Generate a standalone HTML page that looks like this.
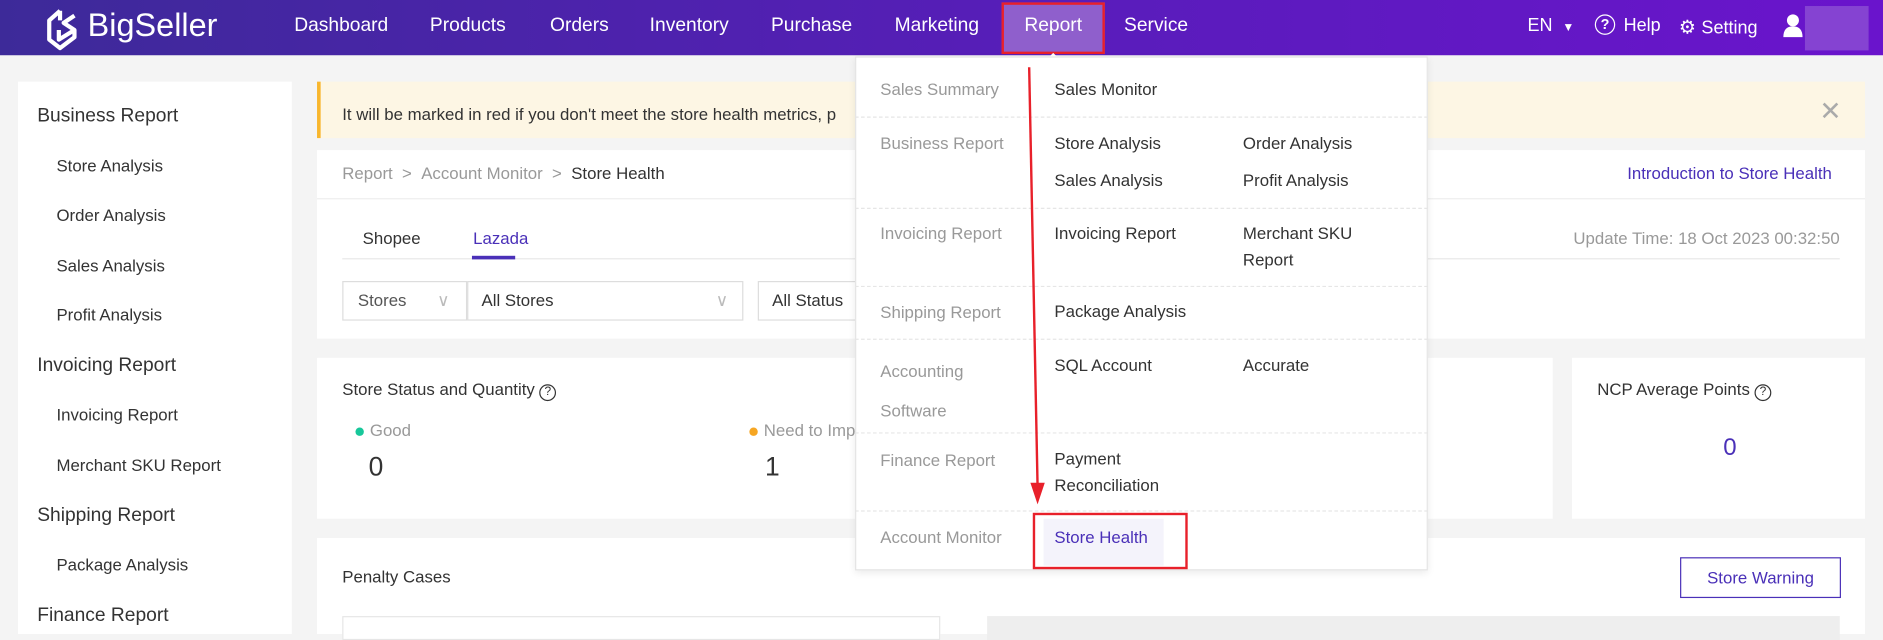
<!DOCTYPE html>
<html><head><meta charset="utf-8"><style>
*{margin:0;padding:0;box-sizing:border-box}
html,body{width:1883px;height:631px;overflow:hidden;background:#f4f4f4}
#s{position:absolute;left:0;top:0;width:1568px;height:526px;transform:scale(1.2009);transform-origin:0 0;font-family:"Liberation Sans",sans-serif;color:#333;font-size:14px}
.a{position:absolute;white-space:nowrap}
.hd{position:absolute;left:0;top:0;width:1568px;height:46px;background:linear-gradient(90deg,#3d2a99,#5a1cbc 60%,#6a14cc)}
.nav{color:#fff;font-size:16px;top:13px}
.w{background:#fff;position:absolute}
.g{color:#999}
.sb{font-size:16px}
.dl{position:absolute;left:712px;width:477px;border-top:1px dashed #e6e6e6}
</style></head><body><div id="s">
<div class="hd"></div>
<svg class="a" style="left:35px;top:5px" width="34" height="40" viewBox="0 0 34 40"><path d="M15 4 L6 12 V28 L15 35 L27 26 V20 L18 14 L27 8 M27 20 L14 28 V20 M15 4 V12" fill="none" stroke="#fff" stroke-width="3.5" stroke-linejoin="round"/></svg>
<div class="a" style="left:73px;top:6px;color:#fff;font-size:27px">BigSeller</div>
<div class="a nav" style="left:245px">Dashboard</div>
<div class="a nav" style="left:358px">Products</div>
<div class="a nav" style="left:458px">Orders</div>
<div class="a nav" style="left:541px">Inventory</div>
<div class="a nav" style="left:642px">Purchase</div>
<div class="a nav" style="left:745px">Marketing</div>
<div class="a" style="left:834px;top:2px;width:86px;height:43px;background:#8f5fcc;border:2px solid #e8202a"></div>
<div class="a nav" style="left:853px">Report</div>
<div class="a" style="left:871px;top:38px;width:0;height:0;border:6px solid transparent;border-bottom-color:#fff"></div>
<div class="a nav" style="left:936px">Service</div>
<div class="a nav" style="left:1272px;font-size:15px">EN <span style="font-size:10px;margin-left:4px">▼</span></div>
<div class="a" style="left:1328px;top:12px;width:17px;height:17px;border:1.5px solid #fff;border-radius:50%;color:#fff;font-size:12px;text-align:center;line-height:14px;font-weight:bold">?</div>
<div class="a nav" style="left:1352px;font-size:15px">Help</div>
<div class="a nav" style="left:1398px;font-size:16px">⚙ <span style="font-size:15px">Setting</span></div>
<svg class="a" style="left:1484px;top:11px" width="18" height="20"><circle cx="9" cy="6" r="5" fill="#fff"/><path d="M1 20 Q1 11 9 11 Q17 11 17 20Z" fill="#fff"/></svg>
<div class="a" style="left:1503px;top:5px;width:53px;height:37px;background:#8543d2"></div>

<div class="w" style="left:15px;top:68px;width:228px;height:460px"></div>
<div class="a sb" style="left:31px;top:88px">Business Report</div>
<div class="a" style="left:47px;top:130px">Store Analysis</div>
<div class="a" style="left:47px;top:171px">Order Analysis</div>
<div class="a" style="left:47px;top:213px">Sales Analysis</div>
<div class="a" style="left:47px;top:254px">Profit Analysis</div>
<div class="a sb" style="left:31px;top:296px">Invoicing Report</div>
<div class="a" style="left:47px;top:337px">Invoicing Report</div>
<div class="a" style="left:47px;top:379px">Merchant SKU Report</div>
<div class="a sb" style="left:31px;top:421px">Shipping Report</div>
<div class="a" style="left:47px;top:462px">Package Analysis</div>
<div class="a sb" style="left:31px;top:504px">Finance Report</div>

<div class="a" style="left:264px;top:68px;width:1289px;height:47px;background:#fdf6e4;border-left:3px solid #f8b62d"></div>
<div class="a" style="left:285px;top:87px">It will be marked in red if you don't meet the store health metrics, p</div>
<div class="a" style="left:1515px;top:80px;color:#aaa;font-size:22px">✕</div>

<div class="w" style="left:264px;top:125px;width:1289px;height:157px"></div>
<div class="a" style="left:264px;top:165px;width:1289px;border-top:1px solid #eee"></div>
<div class="a g" style="left:285px;top:136px">Report &nbsp;&gt; &nbsp;Account Monitor &nbsp;&gt; <span style="color:#333">&nbsp;Store Health</span></div>
<div class="a" style="left:1355px;top:136px;color:#4a30b8">Introduction to Store Health</div>
<div class="a" style="left:302px;top:190px">Shopee</div>
<div class="a" style="left:394px;top:190px;color:#4a30b8">Lazada</div>
<div class="a" style="left:285px;top:215px;width:1247px;border-top:1px solid #e8e8e8"></div>
<div class="a" style="left:393px;top:213px;width:36px;height:3px;background:#4a30b8"></div>
<div class="a g" style="right:36px;top:190px">Update Time: 18 Oct 2023 00:32:50</div>
<div class="a" style="left:285px;top:234px;width:104px;height:33px;border:1px solid #ddd;padding:7px 12px;color:#555">Stores<span style="position:absolute;left:78px;color:#bbb">∨</span></div>
<div class="a" style="left:389px;top:234px;width:230px;height:33px;border:1px solid #ddd;padding:7px 11px">All Stores<span style="position:absolute;left:206px;color:#bbb">∨</span></div>
<div class="a" style="left:631px;top:234px;width:90px;height:33px;border:1px solid #ddd;padding:7px 11px">All Status</div>

<div class="w" style="left:264px;top:298px;width:1029px;height:134px"></div>
<div class="w" style="left:1309px;top:298px;width:244px;height:134px"></div>
<div class="a" style="left:285px;top:316px">Store Status and Quantity <span style="display:inline-block;width:14px;height:14px;border:1px solid #333;border-radius:50%;font-size:10px;text-align:center;line-height:12px">?</span></div>
<div class="a g" style="left:296px;top:350px"><span style="display:inline-block;width:7px;height:7px;border-radius:50%;background:#17c79a;margin-right:5px"></span>Good</div>
<div class="a g" style="left:624px;top:350px"><span style="display:inline-block;width:7px;height:7px;border-radius:50%;background:#f6a623;margin-right:5px"></span>Need to Imp</div>
<div class="a" style="left:307px;top:376px;font-size:22px">0</div>
<div class="a" style="left:637px;top:376px;font-size:22px">1</div>
<div class="a" style="left:1330px;top:316px">NCP Average Points <span style="display:inline-block;width:14px;height:14px;border:1px solid #333;border-radius:50%;font-size:10px;text-align:center;line-height:12px">?</span></div>
<div class="a" style="left:1435px;top:362px;font-size:20px;color:#4a30b8">0</div>

<div class="w" style="left:264px;top:448px;width:1289px;height:80px"></div>
<div class="a" style="left:285px;top:472px">Penalty Cases</div>
<div class="a" style="left:1399px;top:464px;width:134px;height:34px;border:1px solid #4a30b8;color:#4a30b8;text-align:center;line-height:32px">Store Warning</div>
<div class="a" style="left:285px;top:513px;width:498px;height:20px;border:1px solid #e6e6e6;background:#fff"></div>
<div class="a" style="left:822px;top:513px;width:710px;height:20px;background:#eee"></div>

<div class="a" style="left:712px;top:47px;width:477px;height:428px;background:#fff;border:1px solid #e4e4e4;box-shadow:0 2px 6px rgba(0,0,0,.08)"></div>
<div class="dl" style="top:97px"></div><div class="dl" style="top:173px"></div><div class="dl" style="top:238px"></div><div class="dl" style="top:282px"></div><div class="dl" style="top:360px"></div><div class="dl" style="top:425px"></div>
<div class="a g" style="left:733px;top:66px">Sales Summary</div>
<div class="a" style="left:878px;top:66px">Sales Monitor</div>
<div class="a g" style="left:733px;top:111px">Business Report</div>
<div class="a" style="left:878px;top:111px">Store Analysis</div>
<div class="a" style="left:1035px;top:111px">Order Analysis</div>
<div class="a" style="left:878px;top:142px">Sales Analysis</div>
<div class="a" style="left:1035px;top:142px">Profit Analysis</div>
<div class="a g" style="left:733px;top:186px">Invoicing Report</div>
<div class="a" style="left:878px;top:186px">Invoicing Report</div>
<div class="a" style="left:1035px;top:183px;line-height:22px">Merchant SKU<br>Report</div>
<div class="a g" style="left:733px;top:252px">Shipping Report</div>
<div class="a" style="left:878px;top:251px">Package Analysis</div>
<div class="a g" style="left:733px;top:293px;line-height:33px">Accounting<br>Software</div>
<div class="a" style="left:878px;top:296px">SQL Account</div>
<div class="a" style="left:1035px;top:296px">Accurate</div>
<div class="a g" style="left:733px;top:375px">Finance Report</div>
<div class="a" style="left:878px;top:371px;line-height:22px">Payment<br>Reconciliation</div>
<div class="a g" style="left:733px;top:439px">Account Monitor</div>
<div class="a" style="left:869px;top:432px;width:100px;height:39px;background:#f4f3fb"></div>
<div class="a" style="left:878px;top:439px;color:#4a30b8">Store Health</div>
<div class="a" style="left:860px;top:427px;width:129px;height:47px;border:2px solid #e8202a"></div>
<svg class="a" style="left:0;top:0" width="1568" height="526"><line x1="857" y1="56" x2="864" y2="405" stroke="#e8202a" stroke-width="2"/><path d="M858 402 L870 402 L864 420Z" fill="#e8202a"/></svg>
</div></body></html>
